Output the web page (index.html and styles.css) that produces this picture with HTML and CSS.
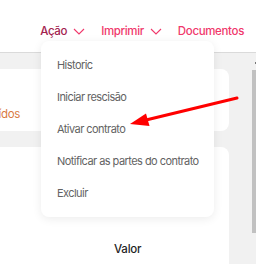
FILE: index.html
```html
<!DOCTYPE html>
<html lang="pt">
<head>
    <meta charset="UTF-8">
    <meta name="viewport" content="width=device-width, initial-scale=1.0">
    <title>Contrato</title>
    <link rel="stylesheet" href="styles.css">
</head>
<body>

    <header class="topbar">
        <nav class="menu">
            <span class="menu-item active">Ação
                <svg class="chevron" viewBox="0 0 12 7"><path d="M1 1l5 5 5-5"/></svg>
            </span>
            <span class="menu-item">Imprimir
                <svg class="chevron" viewBox="0 0 12 7"><path d="M1 1l5 5 5-5"/></svg>
            </span>
            <span class="menu-item">Documentos</span>
        </nav>
    </header>

    <div class="content">
        <div class="main">
            <div class="card status">
                <span class="status-label">Concluídos</span>
            </div>
            <div class="card table">
                <div class="table-head">
                    <span class="col-valor">Valor</span>
                </div>
            </div>
        </div>
        <div class="scroll">
            <div class="scroll-tick"></div>
            <div class="scroll-thumb"></div>
        </div>
    </div>

    <!-- Dropdown of "Ação" -->
    <ul class="dropdown">
        <li>Historic</li>
        <li>Iniciar rescisão</li>
        <li>Ativar contrato</li>
        <li>Notificar as partes do contrato</li>
        <li>Excluir</li>
    </ul>

    <svg class="pointer" viewBox="0 0 256 264">
        <line x1="237" y1="98" x2="146" y2="120"/>
        <polygon points="130,124 146,113.5 149.5,126"/>
    </svg>

</body>
</html>
```

FILE: styles.css
```css
/* Global Styles */
* {
    margin: 0;
    padding: 0;
    box-sizing: border-box;
}

body {
    width: 256px;
    height: 264px;
    overflow: hidden;
    background-color: #fff;
    font-family: Inter, "Noto Sans", sans-serif;
    position: relative;
}

.topbar {
    height: 53px;
    border-bottom: 1px solid #dadada;
    display: flex;
    justify-content: flex-end;
    padding: 23px 12px 0 0;
}

.menu {
    display: flex;
    gap: 16px;
    height: 16px;
}

.menu-item {
    display: flex;
    align-items: center;
    gap: 6px;
    font-size: 11.5px;
    font-weight: 500;
    letter-spacing: -0.35px;
    line-height: 16px;
    color: #f0386b;
}

.menu-item.active {
    color: #a3234f;
}

.chevron {
    width: 12px;
    height: 7px;
    fill: none;
    stroke: #f0386b;
    stroke-width: 1.1;
}

/* Content area */
.content {
    background-color: #f1f1f1;
    height: 211px;
    display: flex;
    padding-top: 16px;
}

.main {
    width: 289px;
    margin-left: -60px;
    display: flex;
    flex-direction: column;
    gap: 16px;
}

.card {
    background-color: #fff;
    border-radius: 8px;
}

.card.status {
    height: 62px;
    display: flex;
    align-items: center;
    padding-top: 27px;
}

.status-label {
    width: 80px;
    text-align: right;
    font-size: 11.5px;
    letter-spacing: -0.3px;
    color: #d97a43;
}

.card.table {
    flex: 1;
    border-radius: 8px 8px 0 0;
    padding: 94px 0 0 174px;
}

.table-head {
    font-size: 11.5px;
    font-weight: 500;
    line-height: 16px;
    letter-spacing: -0.2px;
    color: #1f1f1f;
}

.scroll {
    margin-left: 23px;
    width: 4px;
    position: relative;
}

.scroll-tick {
    position: absolute;
    top: -7px;
    right: 0;
    width: 1px;
    height: 2px;
    background-color: #777;
}

.scroll-thumb {
    width: 4px;
    height: 163px;
    margin-top: 1px;
    background-color: #c1c1c1;
}

/* Dropdown */
.dropdown {
    position: absolute;
    left: 41px;
    top: 41px;
    width: 173px;
    padding: 8px 0;
    list-style: none;
    background-color: #fff;
    border-radius: 8px;
    box-shadow: 0 2px 10px rgba(0, 0, 0, 0.08);
}

.dropdown li {
    height: 32px;
    line-height: 32px;
    padding-left: 16px;
    font-size: 11px;
    letter-spacing: -0.55px;
    color: #636363;
    white-space: nowrap;
}

/* Red annotation arrow */
.pointer {
    position: absolute;
    left: 0;
    top: 0;
    width: 256px;
    height: 264px;
}

.pointer line {
    stroke: #f00;
    stroke-width: 3;
    stroke-linecap: round;
}

.pointer polygon {
    fill: #f00;
}
```
